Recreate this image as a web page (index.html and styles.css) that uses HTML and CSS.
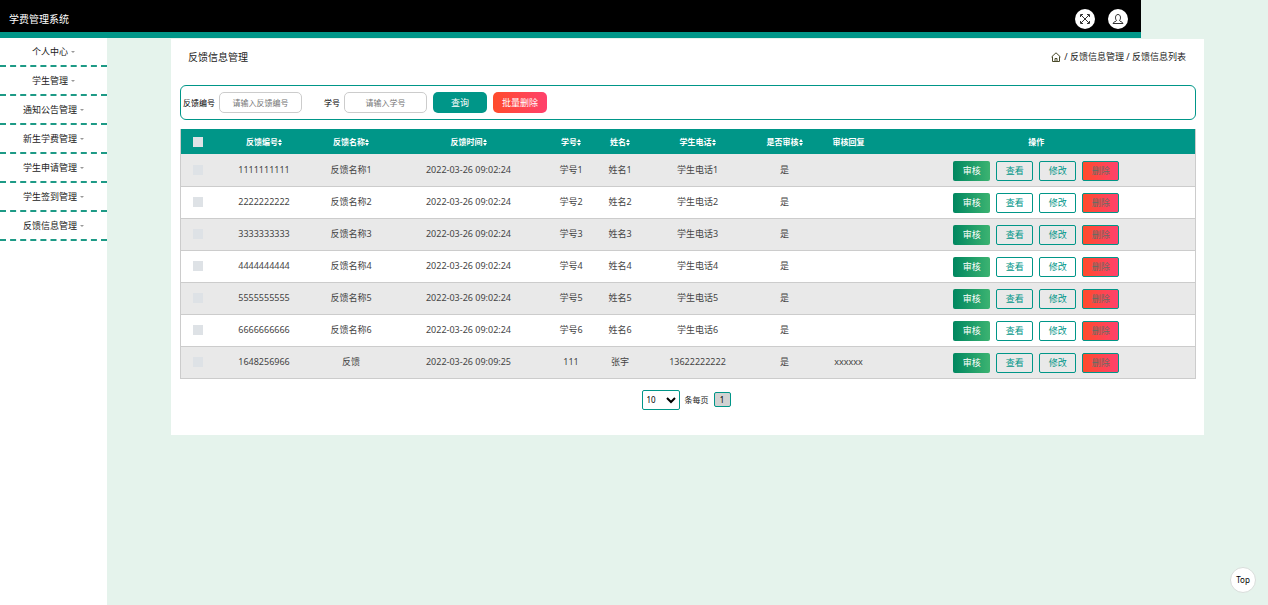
FILE: index.html
```
<!DOCTYPE html>
<html lang="zh-CN">
<head>
    <meta charset="UTF-8">
    <meta name="viewport" content="width=device-width, initial-scale=1.0">
    <title>学费管理系统</title>
    <link rel="stylesheet" href="styles.css">
</head>
<body>
    <header class="navbar">
        <h1 class="brand">学费管理系统</h1>
        <div class="nav-icons">
            <button type="button" class="round-btn" aria-label="全屏">
                <svg viewBox="0 0 20 20" width="20" height="20" fill="none" stroke="#333" stroke-width="1">
                    <path d="M6 6l8 8M14 6l-8 8M5.500 8v-2.500h2.500M12 5.500h2.500v2.500M14.500 12v2.500h-2.500M8 14.500h-2.500v-2.500"/>
                </svg>
            </button>
            <button type="button" class="round-btn" aria-label="个人信息">
                <svg viewBox="0 0 20 20" width="20" height="20" fill="none" stroke="#333" stroke-width="1">
                    <path d="M8.500 11.500C7 10 7 5.500 10 5.500s3 4.500 1.500 6M8.500 11.500c0 1-3 1-3.500 3h10c-.5-2-3.500-2-3.500-3"/>
                </svg>
            </button>
        </div>
    </header>

    <div class="wrapper">
        <nav class="sidebar">
            <a href="#">个人中心<span class="arrow"></span></a>
            <a href="#">学生管理<span class="arrow"></span></a>
            <a href="#">通知公告管理<span class="arrow"></span></a>
            <a href="#">新生学费管理<span class="arrow"></span></a>
            <a href="#">学生申请管理<span class="arrow"></span></a>
            <a href="#">学生签到管理<span class="arrow"></span></a>
            <a href="#">反馈信息管理<span class="arrow"></span></a>
        </nav>

        <main class="content">
            <div class="panel">
                <div class="page-title">
                    <h2>反馈信息管理</h2>
                    <div class="breadcrumb">
                        <a href="#" aria-label="首页">
                            <svg viewBox="0 0 10 10" width="10" height="10" fill="none" stroke="#4a4a2a" stroke-width="1">
                                <path d="M.5 5L5 .8 9.500 5M1.500 4.500v5h7v-5M4 9.500V6.500h2v3"/>
                            </svg>
                        </a>
                        <span>/ 反馈信息管理 / 反馈信息列表</span>
                    </div>
                </div>

                <form class="search">
                    <label for="feedbackNo">反馈编号</label>
                    <input type="text" id="feedbackNo" placeholder="请输入反馈编号">
                    <label for="studentNo" class="second">学号</label>
                    <input type="text" id="studentNo" placeholder="请输入学号">
                    <button type="button" class="btn-search">查询</button>
                    <button type="button" class="btn-batch">批量删除</button>
                </form>

                <table class="list">
                    <colgroup>
                        <col class="c-check">
                        <col class="c-no">
                        <col class="c-name">
                        <col class="c-time">
                        <col class="c-student">
                        <col class="c-person">
                        <col class="c-phone">
                        <col class="c-pass">
                        <col class="c-reply">
                        <col>
                    </colgroup>
                    <thead>
                        <tr>
                            <th><input type="checkbox" aria-label="全选"></th>
                            <th>反馈编号<span class="sort"></span></th>
                            <th>反馈名称<span class="sort"></span></th>
                            <th>反馈时间<span class="sort"></span></th>
                            <th>学号<span class="sort"></span></th>
                            <th>姓名<span class="sort"></span></th>
                            <th>学生电话<span class="sort"></span></th>
                            <th>是否审核<span class="sort"></span></th>
                            <th>审核回复</th>
                            <th>操作</th>
                        </tr>
                    </thead>
                    <tbody>
                        <tr>
                            <td><input type="checkbox" aria-label="选择"></td>
                            <td>1111111111</td>
                            <td>反馈名称1</td>
                            <td>2022-03-26 09:02:24</td>
                            <td>学号1</td>
                            <td>姓名1</td>
                            <td>学生电话1</td>
                            <td>是</td>
                            <td></td>
                            <td><div class="actions"><button type="button" class="audit">审核</button><button type="button">查看</button><button type="button">修改</button><button type="button" class="del">删除</button></div></td>
                        </tr>
                        <tr>
                            <td><input type="checkbox" aria-label="选择"></td>
                            <td>2222222222</td>
                            <td>反馈名称2</td>
                            <td>2022-03-26 09:02:24</td>
                            <td>学号2</td>
                            <td>姓名2</td>
                            <td>学生电话2</td>
                            <td>是</td>
                            <td></td>
                            <td><div class="actions"><button type="button" class="audit">审核</button><button type="button">查看</button><button type="button">修改</button><button type="button" class="del">删除</button></div></td>
                        </tr>
                        <tr>
                            <td><input type="checkbox" aria-label="选择"></td>
                            <td>3333333333</td>
                            <td>反馈名称3</td>
                            <td>2022-03-26 09:02:24</td>
                            <td>学号3</td>
                            <td>姓名3</td>
                            <td>学生电话3</td>
                            <td>是</td>
                            <td></td>
                            <td><div class="actions"><button type="button" class="audit">审核</button><button type="button">查看</button><button type="button">修改</button><button type="button" class="del">删除</button></div></td>
                        </tr>
                        <tr>
                            <td><input type="checkbox" aria-label="选择"></td>
                            <td>4444444444</td>
                            <td>反馈名称4</td>
                            <td>2022-03-26 09:02:24</td>
                            <td>学号4</td>
                            <td>姓名4</td>
                            <td>学生电话4</td>
                            <td>是</td>
                            <td></td>
                            <td><div class="actions"><button type="button" class="audit">审核</button><button type="button">查看</button><button type="button">修改</button><button type="button" class="del">删除</button></div></td>
                        </tr>
                        <tr>
                            <td><input type="checkbox" aria-label="选择"></td>
                            <td>5555555555</td>
                            <td>反馈名称5</td>
                            <td>2022-03-26 09:02:24</td>
                            <td>学号5</td>
                            <td>姓名5</td>
                            <td>学生电话5</td>
                            <td>是</td>
                            <td></td>
                            <td><div class="actions"><button type="button" class="audit">审核</button><button type="button">查看</button><button type="button">修改</button><button type="button" class="del">删除</button></div></td>
                        </tr>
                        <tr>
                            <td><input type="checkbox" aria-label="选择"></td>
                            <td>6666666666</td>
                            <td>反馈名称6</td>
                            <td>2022-03-26 09:02:24</td>
                            <td>学号6</td>
                            <td>姓名6</td>
                            <td>学生电话6</td>
                            <td>是</td>
                            <td></td>
                            <td><div class="actions"><button type="button" class="audit">审核</button><button type="button">查看</button><button type="button">修改</button><button type="button" class="del">删除</button></div></td>
                        </tr>
                        <tr>
                            <td><input type="checkbox" aria-label="选择"></td>
                            <td>1648256966</td>
                            <td>反馈</td>
                            <td>2022-03-26 09:09:25</td>
                            <td>111</td>
                            <td>张宇</td>
                            <td>13622222222</td>
                            <td>是</td>
                            <td>xxxxxx</td>
                            <td><div class="actions"><button type="button" class="audit">审核</button><button type="button">查看</button><button type="button">修改</button><button type="button" class="del">删除</button></div></td>
                        </tr>
                    </tbody>
                </table>

                <div class="pager">
                    <select id="pageSize">
                        <option>10</option>
                        <option>20</option>
                        <option>50</option>
                    </select>
                    <label for="pageSize">条每页</label>
                    <button type="button" class="page">1</button>
                </div>
            </div>
        </main>
    </div>

    <a href="#" class="to-top">Top</a>
</body>
</html>
```
FILE: styles.css
```
* {
    box-sizing: border-box;
}
body {
    margin: 0;
    min-height: 100vh;
    display: flex;
    flex-direction: column;
    background: #e5f3ec;
    color: #222;
    font-family: "Noto Sans", "Noto Sans CJK SC", sans-serif;
    font-size: 9px;
    line-height: 14px;
}
a {
    color: inherit;
    text-decoration: none;
}
button, input, select {
    font: inherit;
    margin: 0;
}
button {
    cursor: pointer;
    padding: 0;
}
h1, h2 {
    margin: 0;
    font-weight: normal;
}

/* header */
.navbar {
    width: 90%;
    height: 38px;
    padding: 5px 13px 0 9px;
    display: flex;
    justify-content: space-between;
    align-items: center;
    background: #000;
    border-bottom: 6px solid #009688;
}
.brand {
    color: #fff;
    font-size: 10px;
}
.nav-icons {
    display: flex;
    gap: 13px;
}
.round-btn {
    width: 20px;
    height: 20px;
    border: none;
    border-radius: 50%;
    background: #fff;
}
.round-btn svg {
    display: block;
}

/* sidebar */
.wrapper {
    flex: 1;
    display: flex;
}
.sidebar {
    width: 107px;
    flex-shrink: 0;
    background: #fff;
}
.sidebar a {
    display: flex;
    justify-content: center;
    align-items: center;
    gap: 3px;
    height: 29px;
    border-bottom: 2px dashed #1d9a86;
}
.arrow {
    border: 2px solid transparent;
    border-top-color: #999;
    border-bottom: none;
}

/* content */
.content {
    flex: 1;
    padding: 1px 64px 0;
}
.panel {
    padding: 0 8px 25px 9px;
    background: #fff;
}
.page-title {
    display: flex;
    justify-content: space-between;
    align-items: center;
    height: 46px;
    padding: 0 10px 10px 8px;
}
.page-title h2 {
    font-size: 10px;
}
.breadcrumb {
    display: flex;
    align-items: center;
    gap: 3px;
}
.breadcrumb svg {
    display: block;
}

.search {
    display: flex;
    align-items: center;
    gap: 4px;
    height: 35px;
    margin-bottom: 9px;
    padding-left: 2px;
    border: 1px solid #009688;
    border-radius: 6px;
}
.search label {
    color: #000;
    font-size: 8px;
}
.search .second {
    margin-left: 18px;
}
.search input {
    width: 83px;
    height: 21px;
    padding: 0;
    border: 1px solid #ccc;
    border-radius: 5px;
    text-align: center;
    font-size: 8px;
}
.search input::placeholder {
    color: #757575;
}
.search button {
    width: 54px;
    height: 21px;
    margin-left: 2px;
    border: none;
    border-radius: 5px;
    color: #fff;
    background: #009688;
}
.search .btn-batch {
    background: linear-gradient(90deg, #ff4b2b, #ff416c);
}

/* table */
.list {
    width: 100%;
    table-layout: fixed;
    border-collapse: collapse;
    border: 1px solid #ccc;
    border-top: none;
    text-align: center;
}
.c-check { width: 35px; }
.c-no { width: 97px; }
.c-name { width: 77px; }
.c-time { width: 158px; }
.c-student { width: 47px; }
.c-person { width: 51px; }
.c-phone { width: 104px; }
.c-pass { width: 70px; }
.c-reply { width: 58px; }
.list thead {
    background: #009688;
}
.list th {
    height: 25px;
    padding: 0;
    color: #fff;
    font-size: 8px;
    white-space: nowrap;
}
.list td {
    height: 32px;
    padding: 0;
    color: #444;
    border-bottom: 1px solid #ccc;
    white-space: nowrap;
}
.list tbody tr:nth-child(odd) {
    background: #e9e9e9;
}
.list input {
    appearance: none;
    display: block;
    width: 10px;
    height: 10px;
    margin: 0 auto;
    background: #dee2e6;
}
.sort {
    display: inline-flex;
    flex-direction: column;
    gap: 1px;
    vertical-align: middle;
}
.sort::before, .sort::after {
    content: "";
    border: 2px solid transparent;
}
.sort::before {
    border-top: none;
    border-bottom: 3px solid #fff;
}
.sort::after {
    border-bottom: none;
    border-top: 3px solid #fff;
}
.actions {
    display: flex;
    justify-content: center;
    gap: 6px;
    padding-top: 2px;
}
.actions button {
    width: 37px;
    height: 20px;
    border: 1px solid #009688;
    border-radius: 2px;
    color: #009688;
    background: transparent;
}
.actions .audit {
    border: none;
    color: #fff;
    background: linear-gradient(90deg, #008760, #3cb371);
}
.actions .del {
    color: #5d6f66;
    background: linear-gradient(90deg, #ff4b2b, #ff416c);
}

/* pager */
.pager {
    display: flex;
    justify-content: center;
    align-items: center;
    gap: 5px;
    margin-top: 11px;
    padding-right: 4px;
    font-size: 8px;
}
.pager select {
    width: 38px;
    height: 20px;
    padding: 0;
    border: 1px solid #009688;
    border-radius: 2px;
    background: #fff;
}
.page {
    width: 17px;
    height: 15px;
    border: 1px solid #009688;
    border-radius: 2px;
    background: #d2d2d2;
}

.to-top {
    position: fixed;
    right: 12px;
    bottom: 12px;
    width: 26px;
    height: 26px;
    border: 1px solid #d8dcda;
    border-radius: 50%;
    background: #fff;
    color: #000;
    font-size: 8px;
    line-height: 24px;
    text-align: center;
}
```
